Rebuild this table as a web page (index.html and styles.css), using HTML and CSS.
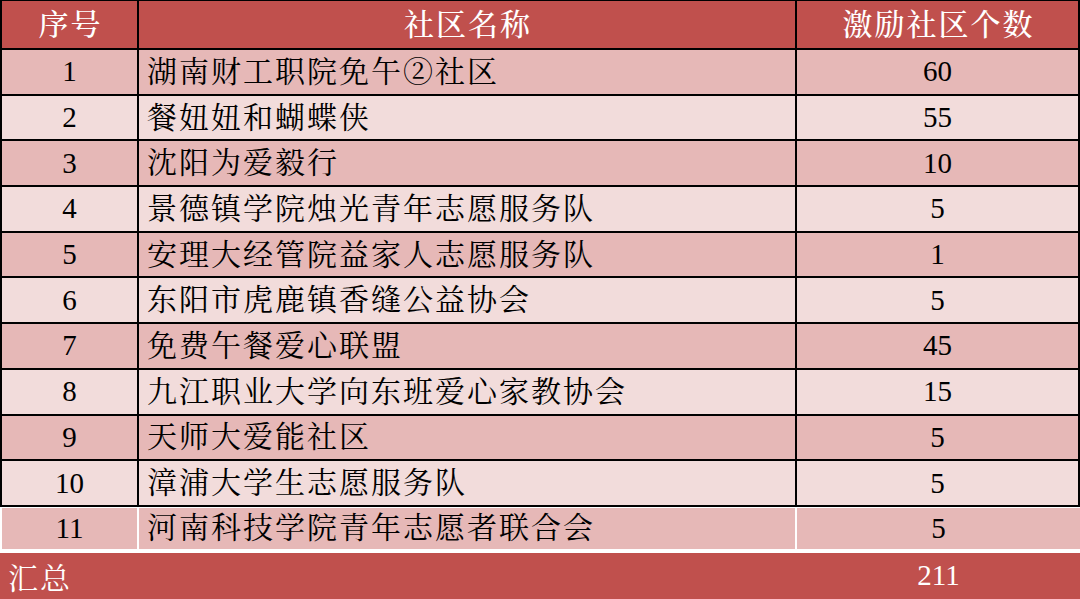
FILE: index.html
```html
<!DOCTYPE html>
<html lang="zh-CN">
<head>
<meta charset="utf-8">
<title>激励社区统计</title>
<link rel="stylesheet" href="styles.css">
</head>
<body>
<div class="sheet">
  <div class="grid">
    <div class="cell head num-col">序号</div>
    <div class="cell head center">社区名称</div>
    <div class="cell head center">激励社区个数</div>

    <div class="cell odd num">1</div>
    <div class="cell odd name zh">湖南财工职院免午②社区</div>
    <div class="cell odd num">60</div>

    <div class="cell even num">2</div>
    <div class="cell even name zh">餐妞妞和蝴蝶侠</div>
    <div class="cell even num">55</div>

    <div class="cell odd num">3</div>
    <div class="cell odd name zh">沈阳为爱毅行</div>
    <div class="cell odd num">10</div>

    <div class="cell even num">4</div>
    <div class="cell even name zh">景德镇学院烛光青年志愿服务队</div>
    <div class="cell even num">5</div>

    <div class="cell odd num">5</div>
    <div class="cell odd name zh">安理大经管院益家人志愿服务队</div>
    <div class="cell odd num">1</div>

    <div class="cell even num">6</div>
    <div class="cell even name zh">东阳市虎鹿镇香缝公益协会</div>
    <div class="cell even num">5</div>

    <div class="cell odd num">7</div>
    <div class="cell odd name zh">免费午餐爱心联盟</div>
    <div class="cell odd num">45</div>

    <div class="cell even num">8</div>
    <div class="cell even name zh">九江职业大学向东班爱心家教协会</div>
    <div class="cell even num">15</div>

    <div class="cell odd num">9</div>
    <div class="cell odd name zh">天师大爱能社区</div>
    <div class="cell odd num">5</div>

    <div class="cell even num">10</div>
    <div class="cell even name zh">漳浦大学生志愿服务队</div>
    <div class="cell even num">5</div>
  </div>

  <div class="last-row">
    <div class="cell odd num">11</div>
    <div class="cell odd name zh">河南科技学院青年志愿者联合会</div>
    <div class="cell odd num">5</div>
  </div>

  <div class="total">
    <div class="total-label">汇总</div>
    <div class="total-val">211</div>
  </div>
</div>
</body>
</html>
```

FILE: styles.css
```css
html, body {
  margin: 0;
  padding: 0;
  background: #ffffff;
}

.sheet {
  width: 1080px;
  height: 599px;
  overflow: hidden;
  font-family: "Liberation Serif", "Noto Serif CJK SC", "Noto Sans CJK SC", serif;
  color: #000000;
}

.grid {
  display: grid;
  grid-template-columns: 135px 656px 281px;
  grid-template-rows: 47px repeat(10, 43.7px);
  column-gap: 2px;
  row-gap: 2px;
  padding: 1px 2px 2px 2px;
  background: #000000;
}

.cell {
  display: flex;
  align-items: center;
  justify-content: center;
  font-size: 29px;
  line-height: 1;
  white-space: nowrap;
}

.zh {
  font-size: 30px;
  letter-spacing: 2px;
}

.center {
  justify-content: center;
  padding-left: 2px;
}

.num-col {
  padding-left: 2px;
}

.name {
  justify-content: flex-start;
  padding-left: 8px;
}

.head {
  background: #c0504d;
  color: #ffffff;
  font-size: 30px;
  letter-spacing: 2px;
  font-weight: 500;
}

.odd {
  background: #e6b8b7;
}

.even {
  background: #f2dcdb;
}

.last-row {
  display: grid;
  grid-template-columns: 135px 656px 283px;
  grid-template-rows: 41px;
  column-gap: 2px;
  padding: 1px 0 0 2px;
  background: #ffffff;
  margin-bottom: 4px;
}

.total {
  display: grid;
  grid-template-columns: 797px 283px;
  height: 46px;
  background: #c0504d;
  color: #ffffff;
}

.total-label {
  display: flex;
  align-items: center;
  padding-left: 8px;
  font-size: 30px;
  letter-spacing: 2px;
}

.total-val {
  display: flex;
  align-items: center;
  justify-content: center;
  font-size: 29px;
}
```
